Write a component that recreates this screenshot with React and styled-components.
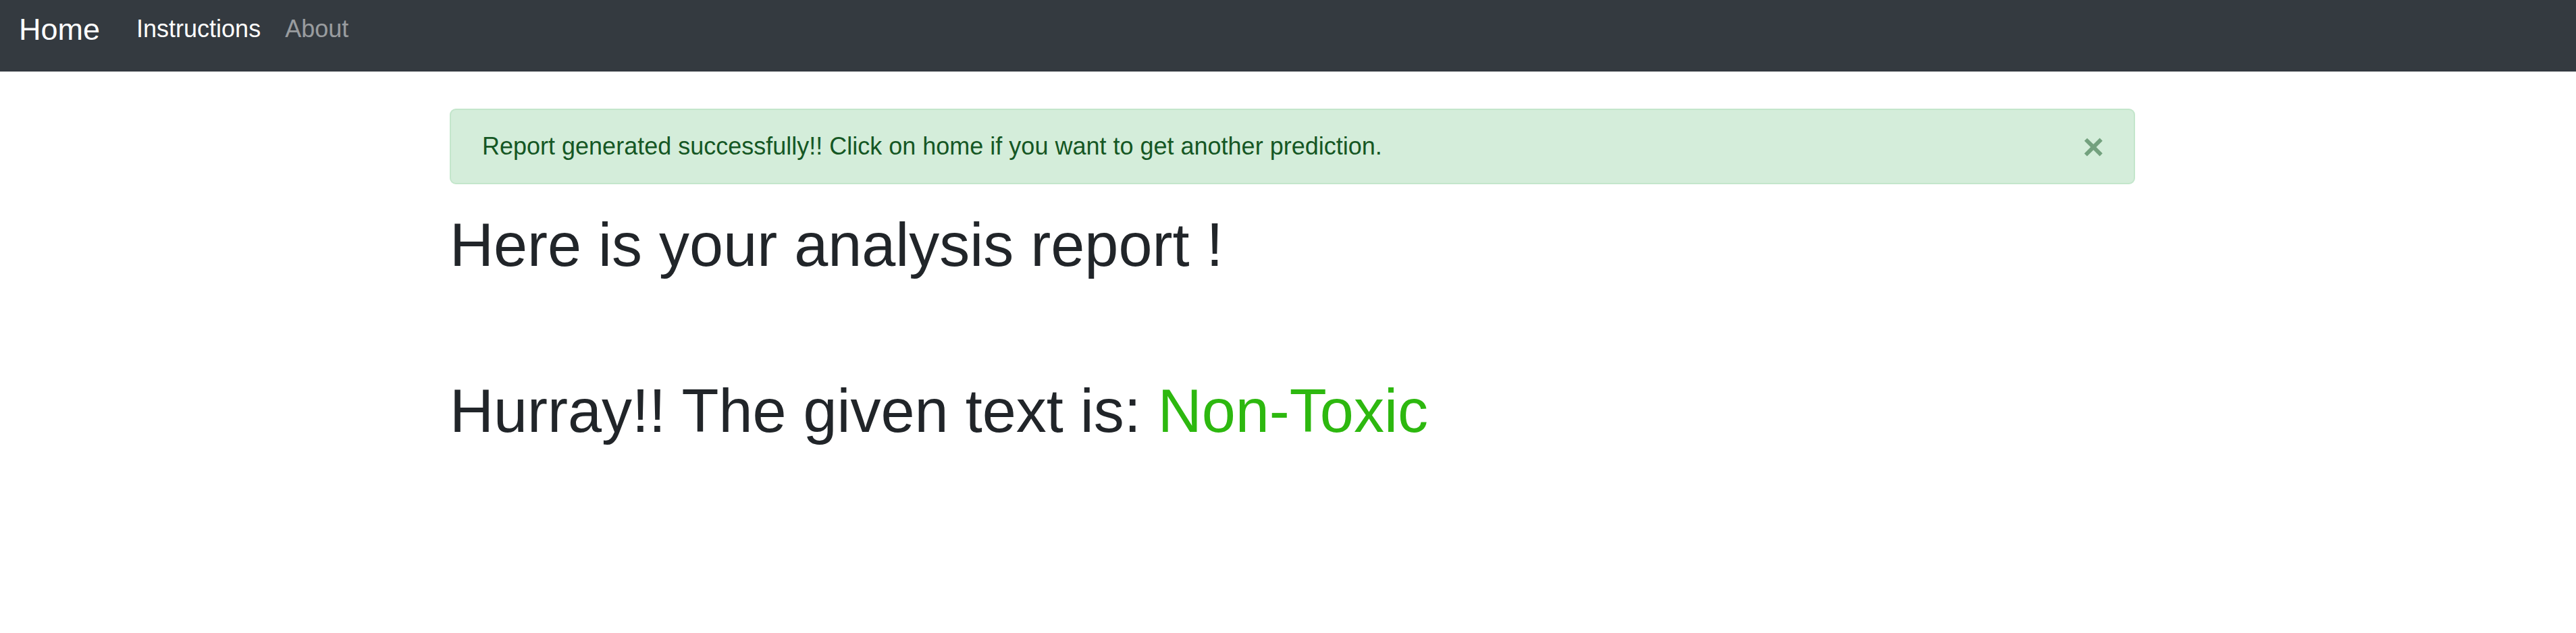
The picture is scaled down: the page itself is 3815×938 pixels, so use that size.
import styled, { createGlobalStyle } from 'styled-components'

const GlobalStyle = createGlobalStyle`
  html, body {
    margin: 0;
    padding: 0;
    background-color: #fff;
  }

  body {
    font-family: "Liberation Sans", Arial, sans-serif;
    color: #212529;
  }
`

const App = () => {
  return (
    <>
      <GlobalStyle />
      <StyledNavbar>
        <StyledBrand href='#'>Home</StyledBrand>
        <StyledNav>
          <StyledNavLink href='#' $isActive>Instructions</StyledNavLink>
          <StyledNavLink href='#'>About</StyledNavLink>
        </StyledNav>
      </StyledNavbar>

      <StyledMain>
        <StyledAlert role='alert'>
          <span>Report generated successfully!! Click on home if you want to get another prediction.</span>
          <StyledClose type='button' aria-label='Close'>&times;</StyledClose>
        </StyledAlert>

        <StyledTitle>Here is your analysis report !</StyledTitle>

        <StyledResult>
          Hurray!! The given text is: <StyledVerdict>Non-Toxic</StyledVerdict>
        </StyledResult>
      </StyledMain>
    </>
  )
}

const StyledNavbar = styled.nav`
  height: 106px;
  box-sizing: border-box;
  padding: 10px 28px 0;
  display: flex;
  align-items: flex-start;
  background-color: #343a40;
`

const StyledBrand = styled.a`
  font-size: 45px;
  line-height: 67.5px;
  color: #fff;
  text-decoration: none;
  margin-right: 36px;
`

const StyledNav = styled.div`
  display: flex;
  padding-top: 5.5px;
`

const StyledNavLink = styled.a`
  font-size: 36px;
  line-height: 54px;
  padding: 0 18px;
  text-decoration: none;
  color: ${({ $isActive }) => $isActive ? '#fff' : 'rgba(255, 255, 255, 0.5)'};
`

const StyledMain = styled.main`
  padding: 55px 0 0 666px;
  width: 2496px;
`

const StyledAlert = styled.div`
  box-sizing: border-box;
  height: 111.5px;
  display: flex;
  align-items: center;
  justify-content: space-between;
  padding: 0 44px 0 46px;
  margin-bottom: 36px;
  border: 2px solid #c3e6cb;
  border-radius: 9px;
  background-color: #d4edda;
  color: #155724;
  font-size: 36px;
  line-height: 54px;
`

const StyledClose = styled.button`
  padding: 0;
  border: 0;
  background: transparent;
  font-family: "Liberation Sans", Arial, sans-serif;
  font-size: 54px;
  font-weight: 700;
  line-height: 1;
  color: #155724;
  opacity: 0.5;
  cursor: pointer;
`

const StyledTitle = styled.h1`
  margin: 0 0 18px;
  font-size: 90px;
  font-weight: 400;
  line-height: 108px;
`

const StyledResult = styled.h1`
  margin: 138.5px 0 0;
  font-size: 90px;
  font-weight: 400;
  line-height: 108px;
`

const StyledVerdict = styled.span`
  color: #2db80f;
`

export default App
